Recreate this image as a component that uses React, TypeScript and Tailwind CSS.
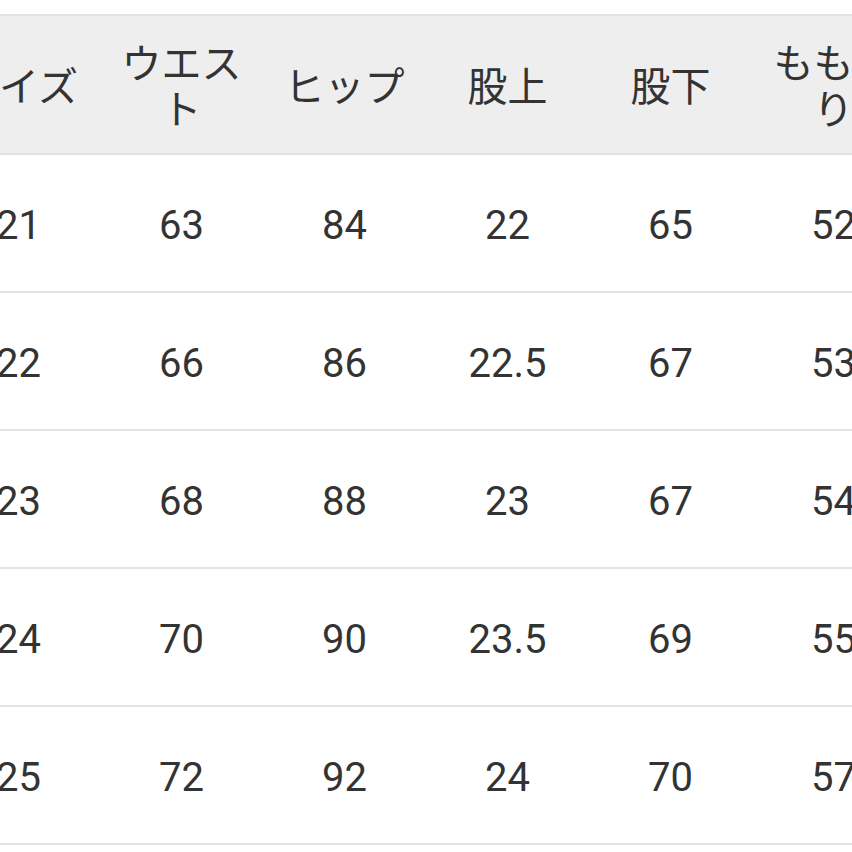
import React from 'react';

const headers = ['サイズ', 'ウエスト', 'ヒップ', '股上', '股下', 'もも周り'];

const rows = [
  ['21', '63', '84', '22', '65', '52'],
  ['22', '66', '86', '22.5', '67', '53'],
  ['23', '68', '88', '23', '67', '54'],
  ['24', '70', '90', '23.5', '69', '55'],
  ['25', '72', '92', '24', '70', '57'],
];

export default function App() {
  return (
    <div className="w-[852px] h-[852px] overflow-hidden bg-white pt-[14px]">
      <table
        className="table-fixed border-collapse w-[978px] ml-[-63px] text-[#333333] text-[40px] leading-[46px]"
        style={{ fontFamily: 'Roboto, "Noto Sans CJK JP", sans-serif' }}
      >
        <thead>
          <tr className="bg-[#eeeeee] border-y-2 border-[#e2e2e2]">
            {headers.map((h) => (
              <th key={h} className="w-[163px] h-[139px] pt-[7px] px-[16px] font-normal text-center align-middle">
                {h}
              </th>
            ))}
          </tr>
        </thead>
        <tbody>
          {rows.map((r, i) => (
            <tr key={i} className="border-b-2 border-[#e2e2e2]">
              {r.map((v, j) => (
                <td key={j} className="h-[138px] pt-[6px] px-[16px] text-center align-middle">
                  {v}
                </td>
              ))}
            </tr>
          ))}
        </tbody>
      </table>
    </div>
  );
}
